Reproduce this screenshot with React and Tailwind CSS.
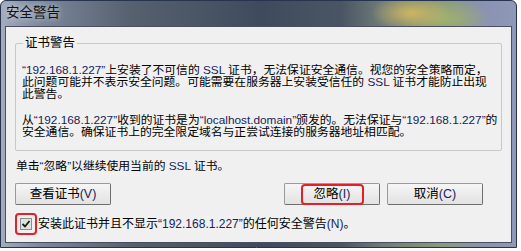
const font = { fontFamily: '"Liberation Sans", "Noto Sans CJK SC", sans-serif' }

function Latin({ children }) {
  return <span className="text-[#15245a]">{children}</span>
}

function Button({ children, highlight }) {
  return (
    <div className="flex h-[22px] w-[96px] items-center justify-center rounded-[2px] border border-[#9a9a9a] border-b-[#6e6e6e] border-r-[#6e6e6e] bg-gradient-to-b from-[#f6f6f6] to-[#e2e2e2] text-[12.5px] text-black">
      {highlight ? (
        <div className="flex h-[21px] w-[63px] items-center justify-center rounded-[4px] border-2 border-[#e3202a]">
          {children}
        </div>
      ) : (
        children
      )}
    </div>
  )
}

export default function App() {
  return (
    <div className="h-[251px] w-[521px] overflow-hidden bg-white" style={font}>
      <div className="flex h-[248px] w-[517px] flex-col rounded-t-[6px] border border-[#27344f] bg-[radial-gradient(ellipse_40px_18px_at_410px_12px,#cdb562,transparent),radial-gradient(ellipse_45px_20px_at_445px_18px,#9fb070,transparent),linear-gradient(90deg,#a3abbd_0px,#7c879c_40px,#56606f_130px,#3f4b5d_260px,#4a5564_340px,#6e7a78_380px,#8a9a7a_440px,#8a92b2_480px,#8f98b8_517px)] px-[4px] pb-[4px]">
        <div className="flex h-[25px] shrink-0 items-center pl-[1px] text-[13.5px] text-[#111] [text-shadow:0_0_6px_rgba(255,255,255,0.8)]">
          安全警告
        </div>
        <div className="flex flex-1 flex-col border border-[#4a5060] bg-[#f0f0f0] px-[9px] text-[11.8px] leading-[12px] text-black">
          <div className="relative mt-[16px] h-[108px] rounded-[2px] border border-[#c8c8c8] px-[6px] pt-[20px]">
            <div className="absolute left-[7px] top-[-8px] bg-[#f0f0f0] px-[2px] text-[12.5px] leading-[14px]">
              证书警告
            </div>
            <p className="whitespace-nowrap">
              <Latin>“192.168.1.227”</Latin>上安装了不可信的 <Latin>SSL</Latin> 证书，无法保证安全通信。视您的安全策略而定，
              <br />
              此问题可能并不表示安全问题。可能需要在服务器上安装受信任的 <Latin>SSL</Latin> 证书才能防止出现
              <br />
              此警告。
            </p>
            <p className="mt-[14px] whitespace-nowrap">
              从<Latin>“192.168.1.227”</Latin>收到的证书是为<Latin>“localhost.domain”</Latin>颁发的。无法保证与<Latin>“192.168.1.227”</Latin>的
              <br />
              安全通信。确保证书上的完全限定域名与正尝试连接的服务器地址相匹配。
            </p>
          </div>
          <p className="mt-[9px] whitespace-nowrap pl-[1px]">
            单击<Latin>“</Latin>忽略<Latin>”</Latin>以继续使用当前的 <Latin>SSL</Latin> 证书。
          </p>
          <div className="mt-[11px] flex items-center">
            <Button>
              查看证书<Latin>(V)</Latin>
            </Button>
            <div className="ml-auto flex gap-[7px] pr-[19px]">
              <Button highlight>
                忽略<Latin>(I)</Latin>
              </Button>
              <Button>
                取消<Latin>(C)</Latin>
              </Button>
            </div>
          </div>
          <div className="mt-[8px] flex items-center">
            <div className="flex h-[22px] w-[22px] items-center justify-center rounded-[4px] border-2 border-[#e3202a]">
              <svg width="12" height="12" viewBox="0 0 12 12">
                <rect x="0.5" y="0.5" width="11" height="11" fill="#dde6da" stroke="#8a8f8a" />
                <path d="M2.5 6 L5 8.5 L9.5 3" fill="none" stroke="#1a1a1a" strokeWidth="1.8" />
              </svg>
            </div>
            <span className="ml-[1px] whitespace-nowrap text-[12px]">
              安装此证书并且不显示<Latin>“192.168.1.227”</Latin>的任何安全警告<Latin>(N)</Latin>。
            </span>
          </div>
        </div>
      </div>
    </div>
  )
}
